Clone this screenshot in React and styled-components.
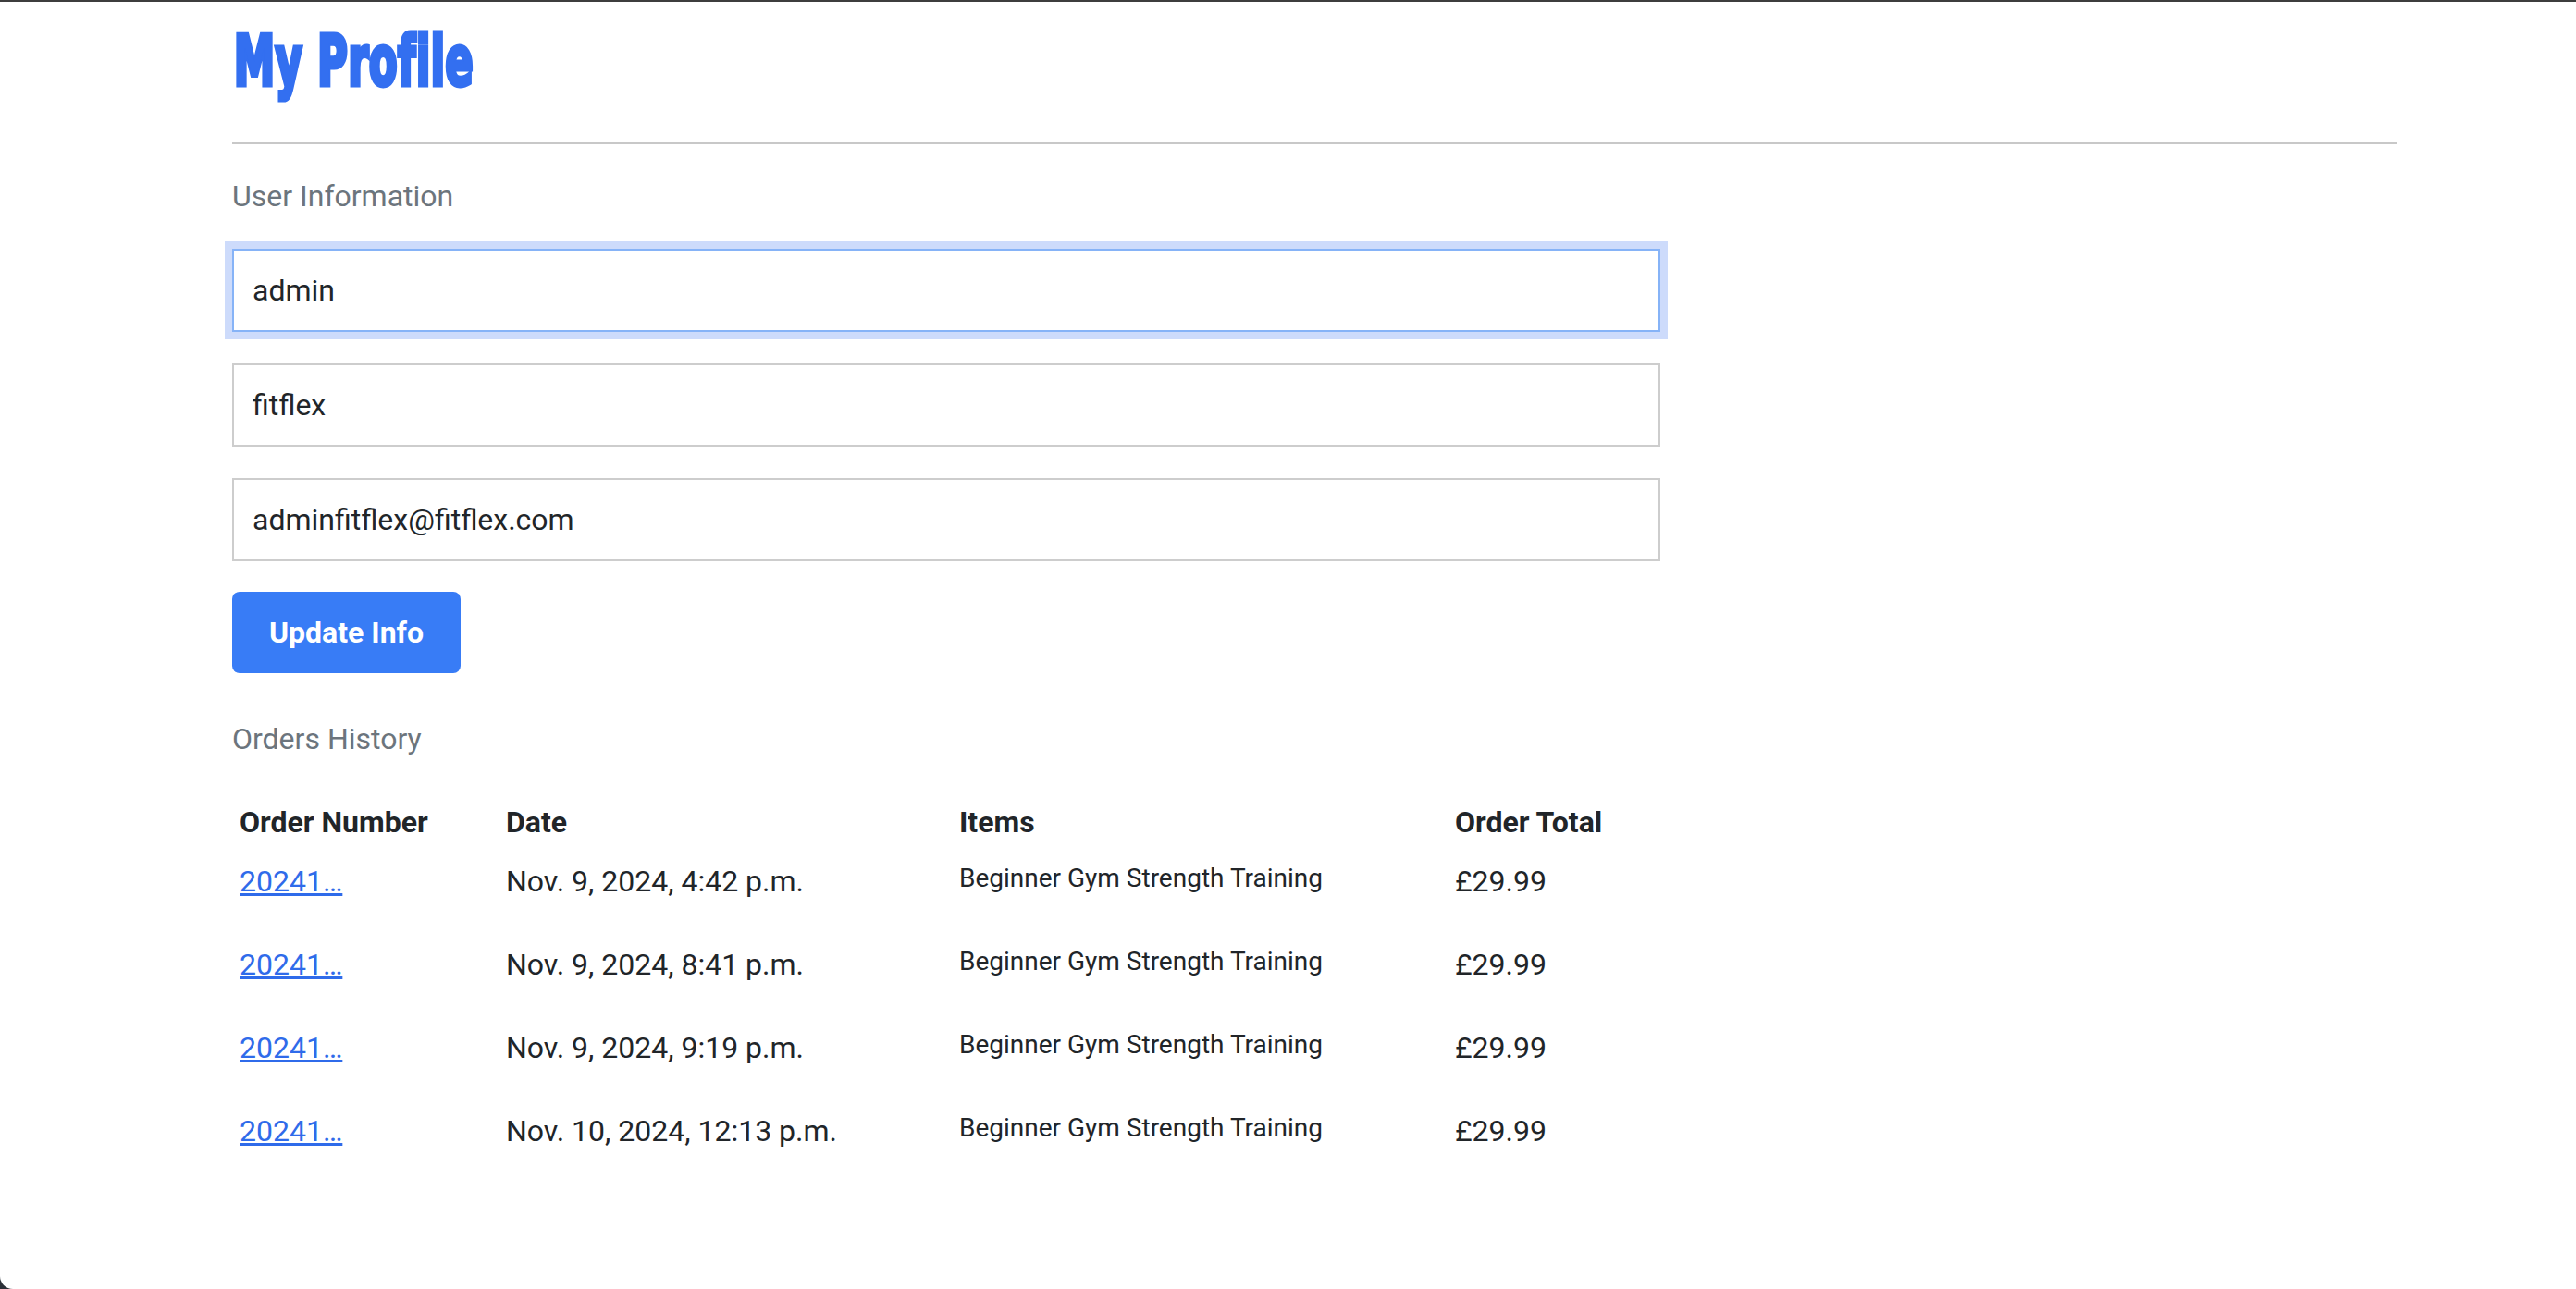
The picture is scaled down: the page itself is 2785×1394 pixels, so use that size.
import React, { useEffect, useRef } from "react";
import styled, { createGlobalStyle } from "styled-components";

const GlobalStyle = createGlobalStyle`
  html, body {
    margin: 0;
    padding: 0;
    background: #2c3038;
  }
  body {
    font-family: Roboto, "Liberation Sans", Arial, sans-serif;
    color: #212529;
  }
  #root {
    border-top: 2px solid #3d3d3d;
  }
`;

const Window = styled.div`
  box-sizing: border-box;
  min-height: 1392px;
  background: #ffffff;
  border-bottom-left-radius: 14px;
  padding: 16px 194px 40px 251px;
`;

const Title = styled.h1`
  margin: 0;
  padding-left: 3px;
  font-family: "Liberation Sans Narrow", "DejaVu Sans Condensed", "Liberation Sans", sans-serif;
  font-weight: 700;
  font-size: 74px;
  line-height: 96px;
  color: #336ff0;
  -webkit-text-stroke: 5px #336ff0;
  paint-order: stroke fill;
  font-variant-ligatures: none;
  letter-spacing: 1px;
  transform: scaleX(0.665);
  transform-origin: left center;
`;

const Divider = styled.hr`
  margin: 40px 0 0;
  border: 0;
  border-top: 2px solid #c8c8c8;
  height: 0;
`;

const SectionLabel = styled.h5`
  margin: ${(p) => p.$top}px 0 ${(p) => p.$bottom}px;
  font-size: 32px;
  line-height: 38.4px;
  font-weight: 400;
  color: #6c757d;
`;

const Form = styled.form`
  display: flex;
  flex-direction: column;
  gap: 34px;
  width: 1544px;
`;

const Field = styled.input`
  box-sizing: border-box;
  width: 100%;
  height: 90px;
  padding: 0 20px;
  border: 2px solid #cdcdcd;
  border-radius: 0;
  background: #fff;
  font-family: Roboto, "Liberation Sans", sans-serif;
  font-size: 32px;
  color: #212529;
  outline: none;
  &:focus {
    border-color: #86b3f7;
    box-shadow: 0 0 0 8px #cddbfb;
  }
`;

const PrimaryButton = styled.button`
  align-self: flex-start;
  height: 88px;
  margin-top: -1px;
  padding: 0 40px;
  border: 0;
  border-radius: 8px;
  background: #387cf6;
  color: #ffffff;
  font-family: Roboto, "Liberation Sans", sans-serif;
  font-weight: 700;
  font-size: 32px;
  cursor: pointer;
`;

const OrdersTable = styled.table`
  width: 1544px;
  border-collapse: collapse;
  table-layout: fixed;
`;

const HeadCell = styled.th`
  box-sizing: border-box;
  width: ${(p) => (p.$w ? `${p.$w}px` : "auto")};
  padding: 8px;
  text-align: left;
  vertical-align: top;
  font-size: 32px;
  line-height: 48px;
  font-weight: 700;
  color: #212529;
`;

const Cell = styled.td`
  box-sizing: border-box;
  padding: 8px;
  text-align: left;
  vertical-align: top;
  font-size: 32px;
  line-height: 48px;
  color: #212529;
`;

const OrderLink = styled.a`
  color: #2f6bea;
  text-decoration: underline;
`;

const ItemText = styled.p`
  margin: 0 0 32px;
  font-size: 28px;
  line-height: 42px;
`;

const orders = [
  { id: "20241…", date: "Nov. 9, 2024, 4:42 p.m.", item: "Beginner Gym Strength Training", total: "£29.99" },
  { id: "20241…", date: "Nov. 9, 2024, 8:41 p.m.", item: "Beginner Gym Strength Training", total: "£29.99" },
  { id: "20241…", date: "Nov. 9, 2024, 9:19 p.m.", item: "Beginner Gym Strength Training", total: "£29.99" },
  { id: "20241…", date: "Nov. 10, 2024, 12:13 p.m.", item: "Beginner Gym Strength Training", total: "£29.99" },
];

export default function App() {
  const firstRef = useRef(null);
  useEffect(() => {
    const el = firstRef.current;
    if (el) {
      el.focus();
      el.setSelectionRange(0, 0);
    }
  }, []);

  return (
    <>
      <GlobalStyle />
      <Window>
        <Title>My Profile</Title>
        <Divider />
        <SectionLabel $top={37} $bottom={38}>User Information</SectionLabel>
        <Form onSubmit={(e) => e.preventDefault()}>
          <Field ref={firstRef} defaultValue="admin" />
          <Field defaultValue="fitflex" />
          <Field defaultValue="adminfitflex@fitflex.com" />
          <PrimaryButton type="submit">Update Info</PrimaryButton>
        </Form>
        <SectionLabel $top={52} $bottom={38}>Orders History</SectionLabel>
        <OrdersTable>
          <thead>
            <tr>
              <HeadCell $w={288}>Order Number</HeadCell>
              <HeadCell $w={490}>Date</HeadCell>
              <HeadCell $w={536}>Items</HeadCell>
              <HeadCell>Order Total</HeadCell>
            </tr>
          </thead>
          <tbody>
            {orders.map((o, i) => (
              <tr key={i}>
                <Cell>
                  <OrderLink href="#">{o.id}</OrderLink>
                </Cell>
                <Cell>{o.date}</Cell>
                <Cell>
                  <ItemText>{o.item}</ItemText>
                </Cell>
                <Cell>{o.total}</Cell>
              </tr>
            ))}
          </tbody>
        </OrdersTable>
      </Window>
    </>
  );
}
